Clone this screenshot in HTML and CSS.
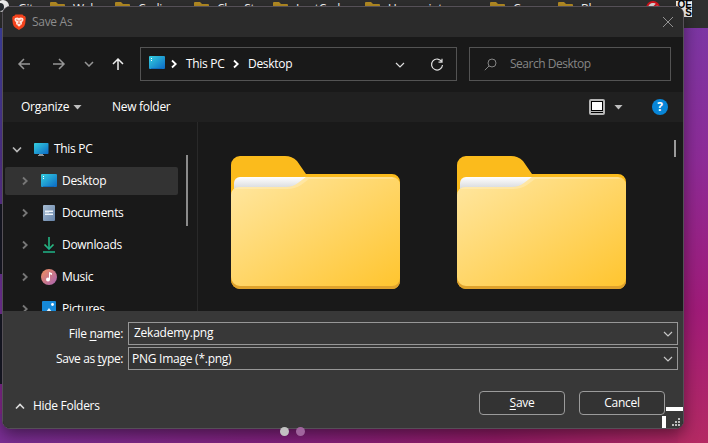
FILE: index.html
```html
<!DOCTYPE html>
<html lang="en">
<head>
<meta charset="utf-8">
<title>Save As</title>
<link rel="stylesheet" href="styles.css">
</head>
<body>
<svg class="defs" width="0" height="0" aria-hidden="true">
  <defs>
    <linearGradient id="blue" x1="0" y1="0" x2="1" y2="1"><stop offset="0" stop-color="#35d0e0"/><stop offset="1" stop-color="#0b68c4"/></linearGradient>
    <linearGradient id="front" x1="0" y1="0" x2="1" y2="1"><stop offset="0" stop-color="#ffe7a2"/><stop offset="1" stop-color="#ffc52f"/></linearGradient>
    <linearGradient id="paper" x1="0" y1="0" x2="0" y2="1"><stop offset="0" stop-color="#ffffff"/><stop offset="1" stop-color="#d3d5d8"/></linearGradient>
    <linearGradient id="music" x1="0" y1="0" x2="1" y2="1"><stop offset="0" stop-color="#f0905c"/><stop offset="1" stop-color="#a863b5"/></linearGradient>
    <linearGradient id="doc" x1="0" y1="0" x2="1" y2="1"><stop offset="0" stop-color="#a5bbd2"/><stop offset="1" stop-color="#6683a8"/></linearGradient>
    <linearGradient id="down" x1="0" y1="0" x2="0" y2="1"><stop offset="0" stop-color="#2fbf7c"/><stop offset="1" stop-color="#15a78f"/></linearGradient>
    <symbol id="desktop-icon" viewBox="0 0 16 14">
      <rect width="16" height="13" rx="1" fill="url(#blue)"/>
      <path d="M2 2h1v1H2zM2 4h1v1H2z" fill="#fff"/><path d="M2 12h11v1H2z" fill="#0b5eb5" opacity=".6"/>
    </symbol>
    <symbol id="folder" viewBox="0 0 169 133">
      <path d="M0 9a9 9 0 0 1 9-9h45q7 0 12 5l9 13h86a8 8 0 0 1 8 8v99a8 8 0 0 1-8 8H9a9 9 0 0 1-9-9z" fill="#fbbb1c"/>
      <path d="M0 110h169v15a8 8 0 0 1-8 8H9a9 9 0 0 1-9-9z" fill="#dfa22c"/>
      <path d="M3 27a6 6 0 0 1 6-6h69L65 34H3z" fill="url(#paper)"/>
      <path d="M0 39a8 8 0 0 1 8-8h47q7 0 12-4l8-6h86a8 8 0 0 1 8 8v93a8 8 0 0 1-8 8H9a9 9 0 0 1-9-9z" fill="url(#front)"/>
      <path d="M3 33q2-2 5-2h47q7 0 12-4l8-6h86l3 2H78l-8 6q-6 4-14 4z" fill="#fff" opacity=".22"/>
    </symbol>
    <symbol id="right" viewBox="0 0 8 10"><path d="M2 1.500 5.700 5 2 8.500" fill="none" stroke="currentColor" stroke-width="1.800"/></symbol>
    <symbol id="dropdown" viewBox="0 0 10 6"><path d="M1 1l4 4 4-4" fill="none" stroke="currentColor" stroke-width="1.200"/></symbol>
    <symbol id="bookmark" viewBox="0 0 16 12"><path d="M0 1q0-1 1-1h5l2 2h6q1 0 1 1v9H0z" fill="#b78e24"/><path d="M0 4h15v8H0z" fill="#d9b13d"/></symbol>
  </defs>
</svg>

<div class="page">
  <div class="bookmarks">
    <svg class="github" viewBox="0 0 12 12"><circle cx="5" cy="6" r="6" fill="#eee"/><circle cx="2" cy="7" r="4" fill="#25292d"/></svg>
    <span class="git">Git</span>
    <svg class="bm"><use href="#bookmark"/></svg><span class="web">Web</span>
    <svg class="bm"><use href="#bookmark"/></svg><span class="coding">Coding</span>
    <svg class="bm"><use href="#bookmark"/></svg><span class="chess">ClassStu</span>
    <svg class="bm"><use href="#bookmark"/></svg><span class="leet">LeetCode</span>
    <svg class="bm"><use href="#bookmark"/></svg><span class="user">Userscripts</span>
    <svg class="bm"><use href="#bookmark"/></svg><span class="cou">Course</span>
    <svg class="bm"><use href="#bookmark"/></svg><span class="blog">Blog</span>
    <svg class="ban" viewBox="0 0 14 14"><circle cx="7" cy="7" r="6" fill="#ddd" stroke="#d8131d" stroke-width="2"/><path d="M3 11l8-8" stroke="#d8131d" stroke-width="2"/></svg>
    <div class="qr"><span>OE</span><span>S</span></div>
  </div>
  <div class="hero">
    <i class="edge first"></i><i class="edge"></i>
    <div class="pager"><i></i><i></i></div>
  </div>
</div>

<div class="dialog">
  <header class="title">
    <svg class="brave" viewBox="0 0 14 16"><path d="M3.5.5h7l1.400 1.600 1.100-.1.800 2-.6 5.600q-.4 2.400-2.300 3.800L7 16l-3.900-2.600Q1.200 12 .8 9.600L.2 4l.8-2 1.100.1z" fill="#f4421c"/><path d="M3 4l2.200-.5L7 4l1.800-.5L11 4l.6 2-1.800 2.800.2 1.200L7 12.800 4 10l.2-1.200L2.400 6z" fill="#ffe5dc"/><path d="M4 5.800l2 .6M10 5.800l-2 .6M7 6v3M5.500 10 7 9l1.500 1" stroke="#f0512e" fill="none" stroke-width=".8"/></svg>
    <span>Save As</span>
    <svg class="close" viewBox="0 0 12 12"><path d="M1 1l10 10M11 1L1 11" stroke="#929292"/></svg>
  </header>

  <nav class="nav">
    <svg class="arrow" viewBox="0 0 14 14"><path d="M13 7H2M7 2L2 7l5 5" /></svg>
    <svg class="arrow fwd" viewBox="0 0 14 14"><path d="M1 7h11M7 2l5 5-5 5"/></svg>
    <svg class="recent" viewBox="0 0 10 6"><path d="M1 1l4 4 4-4"/></svg>
    <svg class="arrow up" viewBox="0 0 14 14"><path d="M7 13V2M2 7l5-5 5 5"/></svg>
    <div class="address">
      <svg class="desk"><use href="#desktop-icon"/></svg>
      <svg class="sep"><use href="#right"/></svg>
      <span class="crumb">This PC</span>
      <svg class="sep"><use href="#right"/></svg>
      <span>Desktop</span>
      <svg class="drop"><use href="#dropdown"/></svg>
      <svg class="reload" viewBox="0 0 14 14"><path d="M11.800 3.800A5.500 5.500 0 1 0 12.500 7M12 .8v3.400H8.500" fill="none" stroke="#ddd" stroke-width="1.200"/></svg>
    </div>
    <div class="search">
      <svg viewBox="0 0 13 13"><circle cx="8" cy="5" r="4" fill="none" stroke="#858585"/><path d="M5 8L.8 12.200" stroke="#858585"/></svg>
      <span>Search Desktop</span>
    </div>
  </nav>

  <div class="toolbar">
    <span class="organize">Organize</span><i class="tri"></i>
    <span class="newfolder">New folder</span>
    <div class="view"><i></i></div><i class="tri viewtri"></i>
    <span class="help">?</span>
  </div>

  <main class="content">
    <aside class="tree">
      <div class="row root"><svg class="open" viewBox="0 0 10 7"><path d="M1 1.500l4 4 4-4"/></svg>
        <svg class="pc" viewBox="0 0 15 13"><rect width="14.500" height="11" rx=".8" fill="url(#blue)"/><path d="M5 11h4v1h1v1H4v-1h1z" fill="#8d9499"/></svg><span>This PC</span></div>
      <div class="row selected"><svg class="chev"><use href="#right"/></svg><svg class="icon desk-row"><use href="#desktop-icon"/></svg><span>Desktop</span></div>
      <div class="row"><svg class="chev"><use href="#right"/></svg><svg class="icon" viewBox="0 0 16 16"><rect x="2" width="12" height="16" rx="1" fill="url(#doc)"/><path d="M4 5.500h8v1.500H4zM4 8.500h8V10H4z" fill="#eef4fa"/><path d="M4 7h4v1.500H4z" fill="#b9cadb"/></svg><span>Documents</span></div>
      <div class="row"><svg class="chev"><use href="#right"/></svg><svg class="icon" viewBox="0 0 16 16"><path d="M3.500 7.500L8 12l4.500-4.500" fill="none" stroke="url(#down)" stroke-width="1.700"/><path d="M7.200 0h1.600v12H7.200z" fill="#24b585"/><path d="M2 14.200h12v1.500H2z" fill="#1fb489"/></svg><span>Downloads</span></div>
      <div class="row"><svg class="chev"><use href="#right"/></svg><svg class="icon" viewBox="0 0 16 16"><circle cx="8" cy="8" r="8" fill="url(#music)"/><circle cx="7" cy="10.500" r="2" fill="#fff"/><path d="M8 10.500V3l3 1.300V6L9 5.200v5.300z" fill="#fff"/></svg><span>Music</span></div>
      <div class="row"><svg class="chev"><use href="#right"/></svg><svg class="icon" viewBox="0 0 16 16"><rect x="1" y="0" width="14" height="15" rx="1" fill="#1689d8"/><circle cx="11.500" cy="3.500" r="1.400" fill="#fff"/><path d="M2 15l6-8 6 8z" fill="#dff2ff"/></svg><span>Pictures</span></div>
    </aside>
    <i class="treebar"></i>
    <section class="files">
      <svg><use href="#folder"/></svg>
      <svg><use href="#folder"/></svg>
      <i class="filebar"></i>
    </section>
  </main>

  <footer class="footer">
    <div class="field"><label>File <u>n</u>ame:</label><div class="box name"><span>Zekademy.png</span><svg><use href="#dropdown"/></svg></div></div>
    <div class="field"><label class="tight">Save as <u>t</u>ype:</label><div class="box type"><span>PNG Image (*.png)</span><svg><use href="#dropdown"/></svg></div></div>
    <div class="actions">
      <svg class="hide" viewBox="0 0 10 7"><path d="M1 5.500l4-4 4 4"/></svg><span class="hide-label">Hide Folders</span>
      <button class="save"><u>S</u>ave</button><button>Cancel</button>
    </div>
    <i class="mark-h"></i><i class="mark-v"></i>
    <svg class="grip" viewBox="0 0 8 8"><path d="M6 0h2v2H6zM3 3h2v2H3zM6 3h2v2H6zM0 6h2v2H0zM3 6h2v2H3zM6 6h2v2H6z" fill="#bdbdbd"/></svg>
  </footer>
</div>
</body>
</html>
```
FILE: styles.css
```css
* { box-sizing: border-box; }
body { margin: 0; width: 708px; height: 443px; overflow: hidden; position: relative; font: 12px/16px "Open Sans", "Noto Sans", sans-serif; letter-spacing: -.3px; color: #fff; }
svg { display: block; flex: none; }
i { display: block; flex: none; }
span { white-space: nowrap; }
u { text-underline-offset: 2px; text-decoration-thickness: 1px; }
.defs { position: absolute; }

.page { height: 443px; display: flex; flex-direction: column; background: #2f2f2f; }
.bookmarks { height: 28px; display: flex; align-items: flex-start; overflow: hidden; }
.bookmarks > span { margin-top: 1px; height: 20px; flex: none; }
.github { width: 12px; height: 12px; margin: 0 6px 0 -2px; }
.git { width: 34px; padding-left: 2px; }
.bm { width: 16px; height: 12px; margin: 2px 7px 0 0; }
.web { width: 42px; }
.coding { width: 56px; }
.chess { width: 56px; }
.leet { width: 69px; }
.user { width: 102px; }
.cou { width: 45px; }
.blog { width: 65px; }
.ban { width: 14px; height: 14px; margin-top: 1px; }
.qr { flex: none; width: 16px; height: 16px; margin-left: 16px; margin-top: 1px; background: #eee; color: #000; display: flex; flex-direction: column; align-items: flex-end; font: bold 10px/8px "Liberation Sans", sans-serif; letter-spacing: 0; }
.qr span { height: 8px; }
.hero { flex: 1; position: relative; background: linear-gradient(162deg, #4548b3 0%, #5a3799 20%, #7b35a3 42%, #9b1c7c 78%, #b72c62 100%); }
.edge { width: 3px; height: 70px; background: #191a28; margin-top: 40px; }
.edge.first { margin-top: 176px; }
.hero::before { content: ""; position: absolute; left: 0; right: 0; bottom: 0; height: 29px; background: linear-gradient(90deg, #7b2f95, #83217e 40%, #941b67 70%, #b52a63); }
.hero::after { content: ""; position: absolute; right: 0; top: 0; width: 30px; height: 415px; background: linear-gradient(#7c36a3, #8d2b96 32%, #a01b78 68%, #b42a63); }
.pager { position: absolute; left: 280px; top: 399px; display: flex; gap: 7px; z-index: 2; }
.pager i { width: 9px; height: 9px; border-radius: 50%; background: #c2c2c2; }
.pager i + i { background: #a0659e; }

.dialog { position: absolute; left: 2px; top: 6px; width: 682px; height: 423px; border: 1px solid #555057; border-radius: 8px; overflow: hidden; display: flex; flex-direction: column; background: #191919; box-shadow: 0 6px 16px rgba(0,0,0,.45); z-index: 1; }
.title { height: 30px; display: flex; align-items: center; background: #2b2b2b; color: #8d8d8d; padding: 0 9px; }
.brave { width: 14px; height: 16px; margin-right: 6px; }
.close { width: 12px; height: 12px; margin-left: auto; margin-top: -1px; }
.nav { height: 55px; display: flex; align-items: center; padding: 0 12px 0 14px; }
.arrow { width: 14px; height: 14px; margin-top: -1px; fill: none; stroke: #969696; stroke-width: 1.5; }
.fwd { margin-left: 21px; }
.recent { width: 10px; height: 6px; margin: -1px 17px 0 18px; fill: none; stroke: #969696; stroke-width: 1.5; }
.up { stroke: #eee; }
.address { flex: none; width: 317px; height: 34px; margin: -1px 0 0 15px; border: 1px solid #535353; display: flex; align-items: center; padding: 0 12px 0 8px; }
.desk { width: 16px; height: 14px; margin: -2px 5px 0 0; }
.sep { width: 8px; height: 10px; margin-right: 8px; }
.crumb { width: 46px; }
.drop { width: 10px; height: 6px; margin: 2px 25px 0 auto; color: #ddd; }
.reload { width: 14px; height: 14px; margin-top: 1px; }
.search { flex: none; width: 202px; height: 34px; margin: -1px 0 0 12px; border: 1px solid #535353; color: #858585; display: flex; align-items: center; padding-left: 14px; letter-spacing: -.48px; }
.search svg { width: 13px; height: 13px; margin-right: 13px; }

.toolbar { height: 30px; background: #202020; display: flex; align-items: center; padding: 0 15px 0 18px; }
.organize { width: 52px; letter-spacing: -.25px; }
.tri { width: 9px; height: 5px; background: #bebebe; clip-path: polygon(0 0, 100% 0, 50% 100%); }
.newfolder { margin-left: 30px; }
.view { width: 16px; height: 16px; margin-left: auto; background: #b6b6b6; border-radius: 2px; padding: 2px; }
.view i { width: 12px; height: 10px; background: #fff; border: 1px solid #000; box-shadow: 0 1px 0 0 #b6b6b6, 0 2px 0 0 #000; }
.viewtri { margin: 0 29px 0 9px; }
.help { width: 16px; height: 16px; border-radius: 50%; background: #0886d8; text-align: center; font-weight: 700; letter-spacing: 0; }

.content { height: 189px; display: flex; }
.tree { width: 176px; padding: 13px 1px 0 2px; display: flex; flex-direction: column; gap: 4px; overflow: hidden; }
.row { height: 28px; flex: none; display: flex; align-items: center; border-radius: 2px; padding-left: 16px; }
.selected { background: #333; }
.root { padding-left: 7px; }
.open { width: 10px; height: 7px; margin-right: 12px; fill: none; stroke: #b8b8b8; stroke-width: 1.7; }
.pc { width: 15px; height: 13px; margin-right: 5px; }
.chev { width: 8px; height: 10px; margin-right: 12px; color: #777; }
.icon { width: 16px; height: 16px; margin-right: 5px; }
.desk-row { height: 14px; }
.treebar { width: 2px; height: 71px; margin: 33px 9px 0 7px; background: #8b8b8b; }
.files { flex: 1; border-left: 1px solid #292929; display: flex; padding: 34px 7px 0 33px; }
.files svg { width: 169px; height: 133px; }
.files svg + svg { margin-left: 57px; }
.filebar { width: 2px; height: 17px; margin: -16px 0 0 auto; background: #9a9a9a; }

.footer { height: 117px; background: #383838; padding-top: 11px; position: relative; display: flex; flex-direction: column; gap: 2px; }
.field { height: 23px; display: flex; }
.field label { width: 125px; text-align: right; padding: 4px 5px 0 0; }
.field .tight { letter-spacing: -.4px; }
.box { width: 550px; border: 1px solid #979797; background: #383838; display: flex; align-items: center; padding: 0 4px 0 3px; letter-spacing: -.25px; }
.box.name { padding-left: 5px; padding-bottom: 1px; }
.box.type { background: #333; }
.box svg { width: 10px; height: 6px; margin-left: auto; color: #c6c6c6; }
.box.name svg { margin-top: 2px; }
.actions { margin-top: 18px; padding: 0 18px 0 12px; display: flex; align-items: center; gap: 14px; height: 26px; }
.hide { width: 10px; height: 7px; margin-top: 6px; margin-right: -6px; fill: none; stroke: #ddd; stroke-width: 1.6; }
.hide-label { margin-top: 6px; }
button { font: inherit; letter-spacing: inherit; color: #fff; background: #333; border: 1px solid #9b9b9b; border-radius: 4px; width: 86px; height: 24px; padding: 1px 0 0; margin-top: -1px; }
.save { margin-left: auto; }
.mark-h { position: absolute; right: 0; top: 96px; width: 17px; height: 4px; background: #fff; }
.mark-v { position: absolute; right: 17px; top: 105px; width: 4px; height: 12px; background: #fff; }
.grip { position: absolute; right: 3px; top: 107px; width: 8px; height: 8px; }
```
